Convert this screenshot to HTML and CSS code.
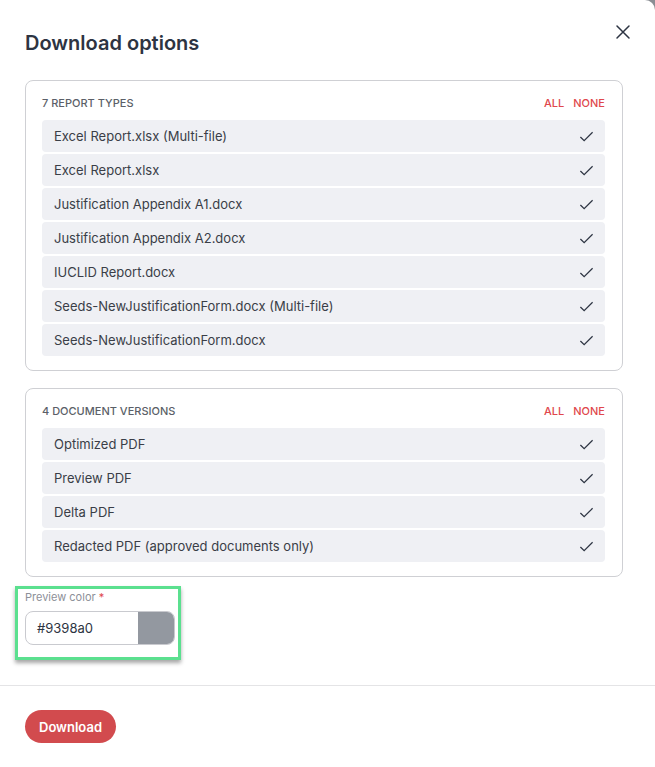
FILE: index.html
```html
<!DOCTYPE html>
<html>
<head>
<meta charset="utf-8">
<link rel="stylesheet" href="styles.css">
</head>
<body>
<div class="modal">
  <div class="head">
    <h1 class="title">Download options</h1>
    <button class="close" aria-label="Close">
      <svg width="16" height="16" viewBox="0 0 16 16"><path d="M2 2 L14 14 M14 2 L2 14" stroke="#2d3442" stroke-width="1.5" fill="none" stroke-linecap="round"/></svg>
    </button>
  </div>
  <div class="body">
    <section class="group">
      <div class="group-head">
        <span class="group-title">7 Report types</span>
        <span class="links"><a>All</a><a>None</a></span>
      </div>
      <ul class="list">
        <li class="item"><span>Excel Report.xlsx (Multi-file)</span><svg class="check" viewBox="0 0 16 16"><path d="M1.5 8.5 L5.5 12.5 L14.5 3.5" /></svg></li>
        <li class="item"><span>Excel Report.xlsx</span><svg class="check" viewBox="0 0 16 16"><path d="M1.5 8.5 L5.5 12.5 L14.5 3.5" /></svg></li>
        <li class="item"><span>Justification Appendix A1.docx</span><svg class="check" viewBox="0 0 16 16"><path d="M1.5 8.5 L5.5 12.5 L14.5 3.5" /></svg></li>
        <li class="item"><span>Justification Appendix A2.docx</span><svg class="check" viewBox="0 0 16 16"><path d="M1.5 8.5 L5.5 12.5 L14.5 3.5" /></svg></li>
        <li class="item"><span>IUCLID Report.docx</span><svg class="check" viewBox="0 0 16 16"><path d="M1.5 8.5 L5.5 12.5 L14.5 3.5" /></svg></li>
        <li class="item"><span>Seeds-NewJustificationForm.docx (Multi-file)</span><svg class="check" viewBox="0 0 16 16"><path d="M1.5 8.5 L5.5 12.5 L14.5 3.5" /></svg></li>
        <li class="item"><span>Seeds-NewJustificationForm.docx</span><svg class="check" viewBox="0 0 16 16"><path d="M1.5 8.5 L5.5 12.5 L14.5 3.5" /></svg></li>
      </ul>
    </section>
    <section class="group">
      <div class="group-head">
        <span class="group-title">4 Document versions</span>
        <span class="links"><a>All</a><a>None</a></span>
      </div>
      <ul class="list">
        <li class="item"><span>Optimized PDF</span><svg class="check" viewBox="0 0 16 16"><path d="M1.5 8.5 L5.5 12.5 L14.5 3.5" /></svg></li>
        <li class="item"><span>Preview PDF</span><svg class="check" viewBox="0 0 16 16"><path d="M1.5 8.5 L5.5 12.5 L14.5 3.5" /></svg></li>
        <li class="item"><span>Delta PDF</span><svg class="check" viewBox="0 0 16 16"><path d="M1.5 8.5 L5.5 12.5 L14.5 3.5" /></svg></li>
        <li class="item"><span>Redacted PDF (approved documents only)</span><svg class="check" viewBox="0 0 16 16"><path d="M1.5 8.5 L5.5 12.5 L14.5 3.5" /></svg></li>
      </ul>
    </section>
    <div class="color-field">
      <label class="field-label">Preview color <span class="req">*</span></label>
      <div class="color-input">
        <span class="color-value">#9398a0</span>
        <span class="swatch"></span>
      </div>
    </div>
  </div>
  <div class="footer">
    <button class="primary">Download</button>
  </div>
</div>
</body>
</html>
```
FILE: styles.css
```css
* { box-sizing: border-box; }
html, body { margin: 0; padding: 0; }
body {
  background: #8a8d93;
  font-family: Inter, "Noto Sans", "Liberation Sans", sans-serif;
  color: #2d3442;
  width: 655px;
  height: 767px;
  overflow: hidden;
}
.modal {
  background: #fff;
  width: 655px;
  height: 767px;
  border-top-right-radius: 10px;
  display: flex;
  flex-direction: column;
}
.head {
  display: flex;
  justify-content: space-between;
  align-items: flex-start;
  padding: 31px 24px 0 25px;
  height: 80px;
}
.title {
  margin: 0;
  font-size: 20px;
  font-weight: 600;
  color: #2d3442;
  line-height: 24px;
}
.close {
  border: 0;
  background: none;
  padding: 0;
  margin-top: -7px;
  width: 16px;
  height: 16px;
  cursor: pointer;
}
.body {
  padding: 0 32px 0 25px;
  display: flex;
  flex-direction: column;
  gap: 17px;
}
.group {
  border: 1px solid #cfd0d4;
  border-radius: 8px;
  padding: 14px 17px 14px 16px;
}
.group-head {
  display: flex;
  justify-content: space-between;
  align-items: center;
  height: 17px;
  margin-bottom: 8px;
  font-size: 11px;
  line-height: 13px;
  text-transform: uppercase;
}
.group-title {
  color: #5b5f68;
  font-weight: 500;
}
.links {
  display: flex;
  gap: 9px;
  color: #e0474c;
  font-weight: 500;
}
.list {
  list-style: none;
  margin: 0;
  padding: 0;
  display: flex;
  flex-direction: column;
  gap: 2px;
}
.item {
  height: 32px;
  background: #eff0f4;
  border-radius: 4px;
  display: flex;
  justify-content: space-between;
  align-items: center;
  padding: 0 11px 0 12px;
  font-size: 13px;
  color: #3a3e47;
}
.check {
  width: 15px;
  height: 15px;
  fill: none;
  stroke: #2d3442;
  stroke-width: 1.3;
}
.color-field {
  margin: -8px 0 0 -10px;
  width: 166px;
  border: 3px solid #5be08f;
  box-shadow: 0 3px 4px rgba(0,0,0,0.35);
  padding: 2px 3px 12px 7px;
  display: flex;
  flex-direction: column;
}
.field-label {
  font-size: 11px;
  color: #8d9098;
  line-height: 13px;
  margin-bottom: 7px;
}
.req { color: #e0474c; }
.color-input {
  display: flex;
  height: 34px;
  border: 1px solid #c9cacf;
  border-radius: 8px;
  overflow: hidden;
}
.color-value {
  flex: 1;
  display: flex;
  align-items: center;
  padding-left: 11px;
  font-size: 13px;
  color: #2d3442;
}
.swatch {
  width: 36px;
  background: #9398a0;
}
.footer {
  margin-top: auto;
  border-top: 1px solid #e4e4e6;
  height: 82px;
  padding: 24px 25px;
}
.primary {
  border: 0;
  background: #d24b4e;
  color: #fff;
  font-family: inherit;
  font-size: 13px;
  font-weight: 600;
  height: 33px;
  padding: 0 14px;
  border-radius: 17px;
}
```
